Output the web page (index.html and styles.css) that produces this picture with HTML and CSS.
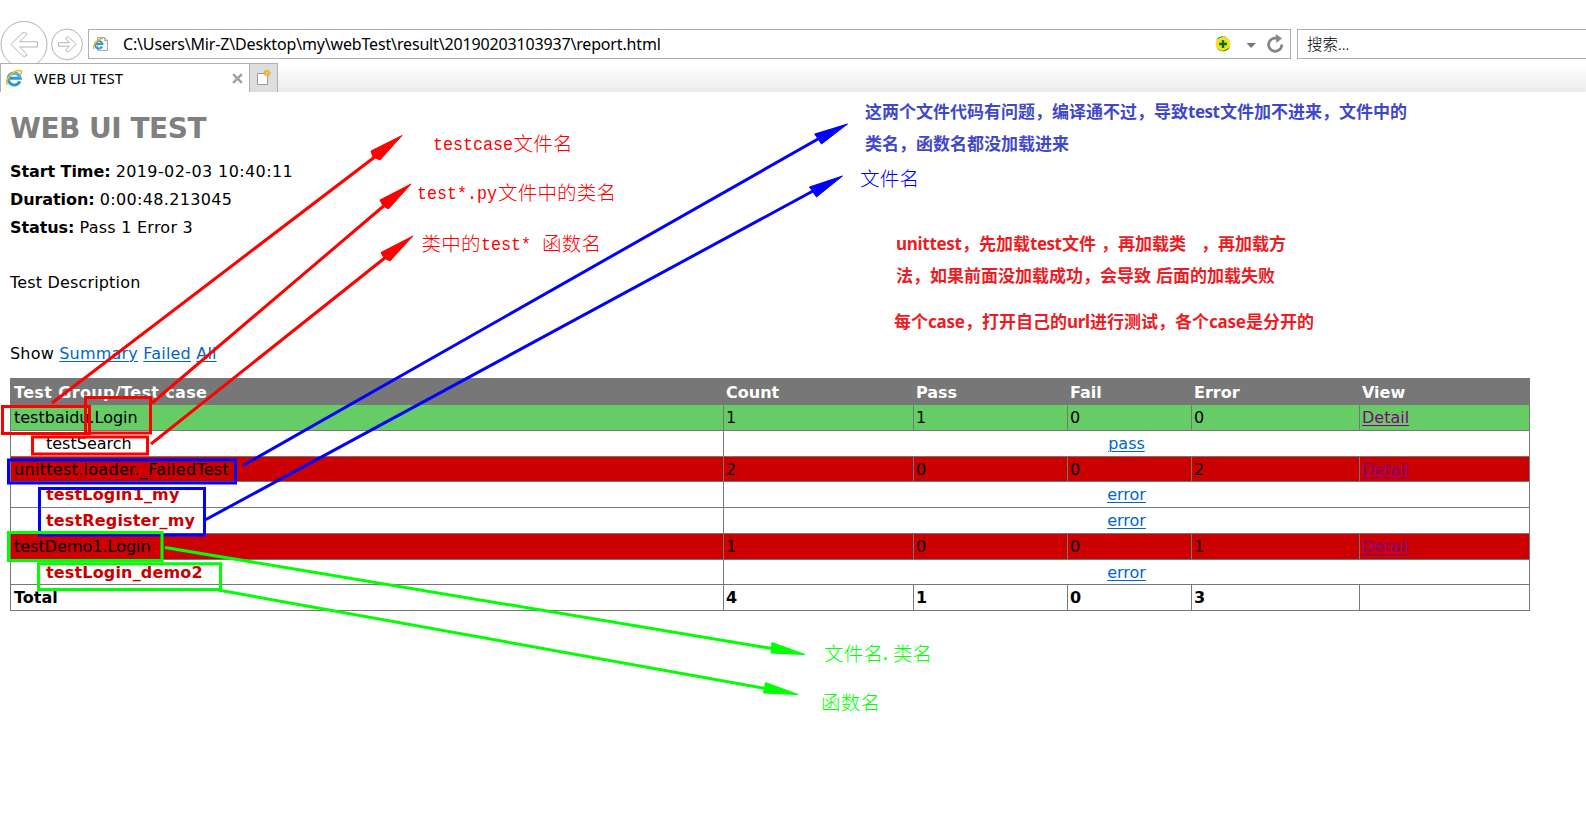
FILE: index.html
```html
<!DOCTYPE html>
<html lang="zh-CN">
<head>
<meta charset="utf-8">
<title>WEB UI TEST</title>
<link rel="stylesheet" href="styles.css">
</head>
<body>
<header class="browser">
  <div class="toolbar">
    <svg class="nav" width="88" height="43" viewBox="0 20 88 43" fill="none" stroke="#b4b4b4">
      <circle cx="24" cy="44.4" r="23" fill="#fff"/>
      <circle cx="67" cy="44.4" r="15.4" fill="#fff"/>
      <path d="M11 44.4 L22.3 33 Q24.5 31.4 26.8 33.5 Q27 34.6 25.5 36 L19.7 41.8 H37.5 V47 H19.7 L25.5 52.8 Q27 54.3 26.8 55.3 Q24.5 57.5 22.3 55.8 Z"/>
      <path d="M76 44.4 L69 37.3 Q67.3 36.3 65.8 37.9 Q65.6 38.9 66.5 39.8 L69.3 42.7 H58.5 V46.2 H69.3 L66.5 49.1 Q65.6 50 65.8 50.9 Q67.3 52.6 69 51.5 Z"/>
    </svg>
    <div class="address">
      <svg class="page-icon" width="16" height="16" viewBox="0 0 16 16">
        <path d="M4.5 1.5h7l3 3v10h-10z" fill="#f6f6f6" stroke="#a9a9a9"/>
        <path d="M11.5 1.5v3h3" fill="none" stroke="#a9a9a9"/>
        <path d="M9 10.5A3.700 3.700 0 1 1 9.300 8H3" fill="none" stroke="#2b9bd8" stroke-width="2"/>
        <path d="M.8 13C-1 10 5.500 1.500 10 2.600" fill="none" stroke="#f2b90f" stroke-width="1.400"/>
      </svg>
      <span class="url">C:\Users\Mir-Z\Desktop\my\webTest\result\20190203103937\report.html</span>
      <svg class="tools" width="72" height="22" viewBox="0 0 72 22">
        <circle cx="9" cy="11" r="7.500" fill="#f8df1c"/>
        <path d="M2 7A8 8 0 0 1 15.500 7Q12 2.500 8 4T2 7zM16 14A8 8 0 0 1 2.500 15Q7 19 11 17T16 14z" fill="#1f9a28"/>
        <path d="M9 7v8M5 11h8" stroke="#086b19" stroke-width="2.400"/>
        <path d="M32.500 10h9.500l-4.800 5z" fill="#777"/>
        <path d="M63.500 5.500A6.600 6.600 0 1 0 67.800 11.500" fill="none" stroke="#858585" stroke-width="2.800"/>
        <path d="M61.500 1l6.500 4.200-5.500 4.800z" fill="#858585"/>
      </svg>
    </div>
    <div class="search">搜索...</div>
  </div>
  <div class="tabs">
    <div class="tab">
      <svg width="18" height="18" viewBox="0 0 18 18">
        <path d="M13.800 12.300A6 6 0 1 1 14.200 9.300H4" fill="none" stroke="#2d98d6" stroke-width="3"/>
        <path d="M14.200 9.300A6 6 0 0 0 3 7" fill="none" stroke="#69c5ee" stroke-width="1.200"/>
        <path d="M1.500 15.500C-2 12 7 .500 14 1.600Q16.500 2 14.800 5.500" fill="none" stroke="#f4bd18" stroke-width="1.700"/>
      </svg>
      <span class="tab-title">WEB UI TEST</span>
      <svg class="close" width="11" height="11" viewBox="0 0 10 10"><path d="M1 1l8 8M9 1L1 9" stroke="#a0a0a0" stroke-width="2.200"/></svg>
    </div>
    <div class="new-tab">
      <svg width="16" height="18" viewBox="0 0 16 18">
        <path d="M1.500 4.500h10v11h-10z" fill="#fff" stroke="#999"/>
        <path d="M11 .500v7M7.500 4h7M8.500 1.500l5 5M13.500 1.500l-5 5" stroke="#f0a020" stroke-width="1.300"/>
        <circle cx="11" cy="4" r="1.800" fill="#ffc640"/>
      </svg>
    </div>
  </div>
</header>

<main class="report">
  <h1>WEB UI TEST</h1>
  <p class="meta"><b>Start Time:</b> <span class="stamp">2019-02-03 10:40:11</span></p>
  <p class="meta"><b>Duration:</b> <span class="duration">0:00:48.213045</span></p>
  <p class="meta"><b>Status:</b> <span class="status">Pass 1 Error 3</span></p>
  <p class="description">Test Description</p>
  <p class="show">Show <a href="#">Summary</a> <a href="#">Failed</a> <a href="#">All</a></p>

  <table>
    <colgroup><col class="c-name"><col class="c-count"><col class="c-pass"><col class="c-fail"><col class="c-error"><col class="c-view"></colgroup>
    <tr class="head"><th>Test Group/Test case</th><th>Count</th><th>Pass</th><th>Fail</th><th>Error</th><th>View</th></tr>
    <tr class="ok"><td>testbaidu.Login</td><td>1</td><td>1</td><td>0</td><td>0</td><td><a class="seen" href="#">Detail</a></td></tr>
    <tr><td class="case">testSearch</td><td class="result" colspan="5"><a href="#">pass</a></td></tr>
    <tr class="bad short"><td class="loader">unittest.loader._FailedTest</td><td>2</td><td>0</td><td>0</td><td>2</td><td><a class="seen" href="#">Detail</a></td></tr>
    <tr><td class="case failed">testLogin1_my</td><td class="result" colspan="5"><a href="#">error</a></td></tr>
    <tr><td class="case failed">testRegister_my</td><td class="result" colspan="5"><a href="#">error</a></td></tr>
    <tr class="bad"><td>testDemo1.Login</td><td>1</td><td>0</td><td>0</td><td>1</td><td><a class="seen" href="#">Detail</a></td></tr>
    <tr class="short"><td class="case failed">testLogin_demo2</td><td class="result" colspan="5"><a href="#">error</a></td></tr>
    <tr class="total"><td>Total</td><td>4</td><td>1</td><td>0</td><td>3</td><td></td></tr>
  </table>
</main>

<svg class="notes" width="1586" height="825" viewBox="0 0 1586 825">
  <g class="ink red">
    <path d="M2.500 406.500H89.500V433.500H2.500zM85.500 397.500H150.500V433H85.500zM32.500 437H147.500V454H32.500z"/>
    <path d="M52 403L376 156M152 403L386 204M151 444L386 257"/>
    <path class="tip" d="M402 135.500L371 151L373 157L380 160zM411 184L380 200L383 206L388.500 209zM413 236L381 252.500L384 258L390 261z"/>
  </g>
  <g class="ink blue">
    <path d="M8.500 460H235.500V483H8.500zM39.500 488.500H204.500V535H39.500z"/>
    <path d="M243 465.500L818 139M205 520L813 191"/>
    <path class="tip" d="M847.500 124L814.700 134L821.500 144zM842.500 176L809.500 187L816.500 197z"/>
  </g>
  <g class="ink green">
    <path d="M8.500 532.500H162V560.500H8.500zM38.500 563.800H220.500V589.500H38.500z"/>
    <path d="M165 547.500L772 648.500M218 590L765 688.500"/>
    <path class="tip" d="M805 654.500L772 642.500L771 653zM798 694.500L765.500 682.500L763.500 693z"/>
  </g>
  <g class="hand red">
    <text class="mono" x="433" y="150" textLength="80" lengthAdjust="spacingAndGlyphs">testcase</text><text x="513.500" y="151" textLength="59">文件名</text>
    <text class="mono" x="417" y="199" textLength="80" lengthAdjust="spacingAndGlyphs">test*.py</text><text x="498" y="200" textLength="118">文件中的类名</text>
    <text x="421.500" y="251" textLength="59">类中的</text><text class="mono" x="481" y="250" textLength="50" lengthAdjust="spacingAndGlyphs">test*</text><text x="542" y="251" textLength="59">函数名</text>
  </g>
  <g class="hand blue"><text x="860" y="186" textLength="59">文件名</text></g>
  <g class="hand green">
    <text x="824" y="661" textLength="59">文件名</text><text class="mono" x="880" y="660">.</text><text x="893" y="661" textLength="39">类名</text>
    <text x="821" y="710" textLength="59">函数名</text>
  </g>
  <g class="bold indigo">
    <text x="865" y="117.500" textLength="323">这两个文件代码有问题，编译通不过，导致</text><text x="1188" y="117.500" textLength="32">test</text><text x="1220" y="117.500" textLength="187">文件加不进来，文件中的</text>
    <text x="865" y="149.500" textLength="204">类名，函数名都没加载进来</text>
  </g>
  <g class="bold crimson">
    <text x="896" y="249.500" textLength="66">unittest</text><text x="962" y="249.500" textLength="68">，先加载</text><text x="1030" y="249.500" textLength="32">test</text><text x="1062" y="249.500">文件</text><text x="1101" y="249.500" textLength="85">，再加载类</text><text x="1201" y="249.500" textLength="85">，再加载方</text>
    <text x="896" y="281.500" textLength="255">法，如果前面没加载成功，会导致</text><text x="1156" y="281.500" textLength="119">后面的加载失败</text>
    <text x="894" y="327.500">每个</text><text x="928" y="327.500" textLength="37">case</text><text x="965" y="327.500" textLength="102">，打开自己的</text><text x="1067" y="327.500" textLength="23">url</text><text x="1090" y="327.500" textLength="119">进行测试，各个</text><text x="1209" y="327.500" textLength="37">case</text><text x="1246" y="327.500" textLength="68">是分开的</text>
  </g>
</svg>
</body>
</html>
```
FILE: styles.css
```css
* { box-sizing: border-box; }
body {
  margin: 0;
  height: 825px;
  position: relative;
  overflow: hidden;
  background: #fff;
  color: #000;
  font: 16px "DejaVu Sans", sans-serif;
}
.browser { font-family: "Noto Sans", "Noto Sans CJK SC", sans-serif; padding-top: 20px; }
.toolbar { display: flex; height: 43px; align-items: flex-start; }
.nav { flex: none; }
.address {
  width: 1203px;
  height: 30px;
  margin: 9px 6px 0 0;
  flex: none;
  display: flex;
  align-items: center;
  padding: 0 4px;
  border: 1px solid #b0b0b0;
}
.url { margin-left: 14px; font-size: 16px; white-space: nowrap; letter-spacing: -0.16px; }
.tools { margin-left: auto; }
.search {
  flex: 1;
  height: 30px;
  margin-top: 9px;
  padding-left: 9px;
  line-height: 28px;
  font-size: 15.500px;
  font-weight: 300;
  border: 1px solid #b0b0b0;
  border-right: 0;
}
.tabs { display: flex; height: 29px; background: linear-gradient(#fff 10%, #ebebeb); }
.tab {
  width: 250px;
  display: flex;
  align-items: center;
  padding: 0 6px 0 5px;
  background: #fff;
  border: 1px solid #b0b0b0;
  border-bottom: 0;
}
.tab-title { margin-left: 10px; font-size: 15px; }
.close { margin-left: auto; }
.new-tab {
  width: 28px;
  display: flex;
  align-items: center;
  justify-content: center;
  background: #dedede;
  border: 1px solid #b0b0b0;
  border-width: 1px 1px 0 0;
}
.report { padding: 19px 10px 0; }
h1 { margin: 0 0 11px; font-size: 28px; line-height: 36px; letter-spacing: -0.5px; color: #808080; }
p { margin: 0; line-height: 28px; }
.stamp { letter-spacing: 0.4px; }
.meta b { letter-spacing: -0.08px; }
.duration { letter-spacing: 0.35px; }
.status { letter-spacing: 0.25px; }
.description { margin-top: 27px; letter-spacing: 0.17px; }
.show { margin-top: 43px; margin-bottom: 10px; letter-spacing: 0.2px; }
a { color: #0066cc; text-decoration: underline; text-decoration-thickness: 1px; text-underline-offset: 2px; }
.seen { color: #800080; }
table { width: 1520px; table-layout: fixed; border-collapse: separate; border-spacing: 0; }
.c-name { width: 714px; }
.c-count { width: 190px; }
.c-pass { width: 154px; }
.c-fail { width: 124px; }
.c-error { width: 168px; }
.c-view { width: 170px; }
tr { height: 26px; }
.short { height: 25px; }
.head { height: 27px; background: #777; color: #fff; }
th, td {
  padding: 1px 2px 0;
  line-height: 22px;
  text-align: left;
  vertical-align: middle;
  border: 0 solid #777;
  border-width: 0 1px 1px 0;
}
th { padding-top: 3px; }
th:first-child, td:first-child { padding-left: 3px; border-left-width: 1px; }
th:first-child { letter-spacing: 0.36px; }
.loader { letter-spacing: 0.3px; }
.ok { background: #66cc66; }
.bad { background: #cc0000; }
td.case { padding-left: 35px; }
.failed { color: #cc0000; font-weight: bold; letter-spacing: 0.16px; }
.result { text-align: center; }
.total { font-weight: bold; }
.notes { position: absolute; left: 0; top: 0; pointer-events: none; }
.red { --ink: #ff0000; }
.blue { --ink: #0000ff; }
.green { --ink: #00ff00; }
.ink { fill: none; stroke: var(--ink); stroke-width: 3; }
.tip { fill: var(--ink); stroke-width: 1; }
.hand { fill: var(--ink); font: 300 19.500px "Noto Sans CJK SC", sans-serif; }
.mono { font-family: "Liberation Mono", monospace; font-size: 18px; }
.bold { font: bold 17px "Noto Sans", "Noto Sans CJK SC", sans-serif; }
.indigo { fill: #3f48cc; }
.crimson { fill: #ed1c24; }
```
